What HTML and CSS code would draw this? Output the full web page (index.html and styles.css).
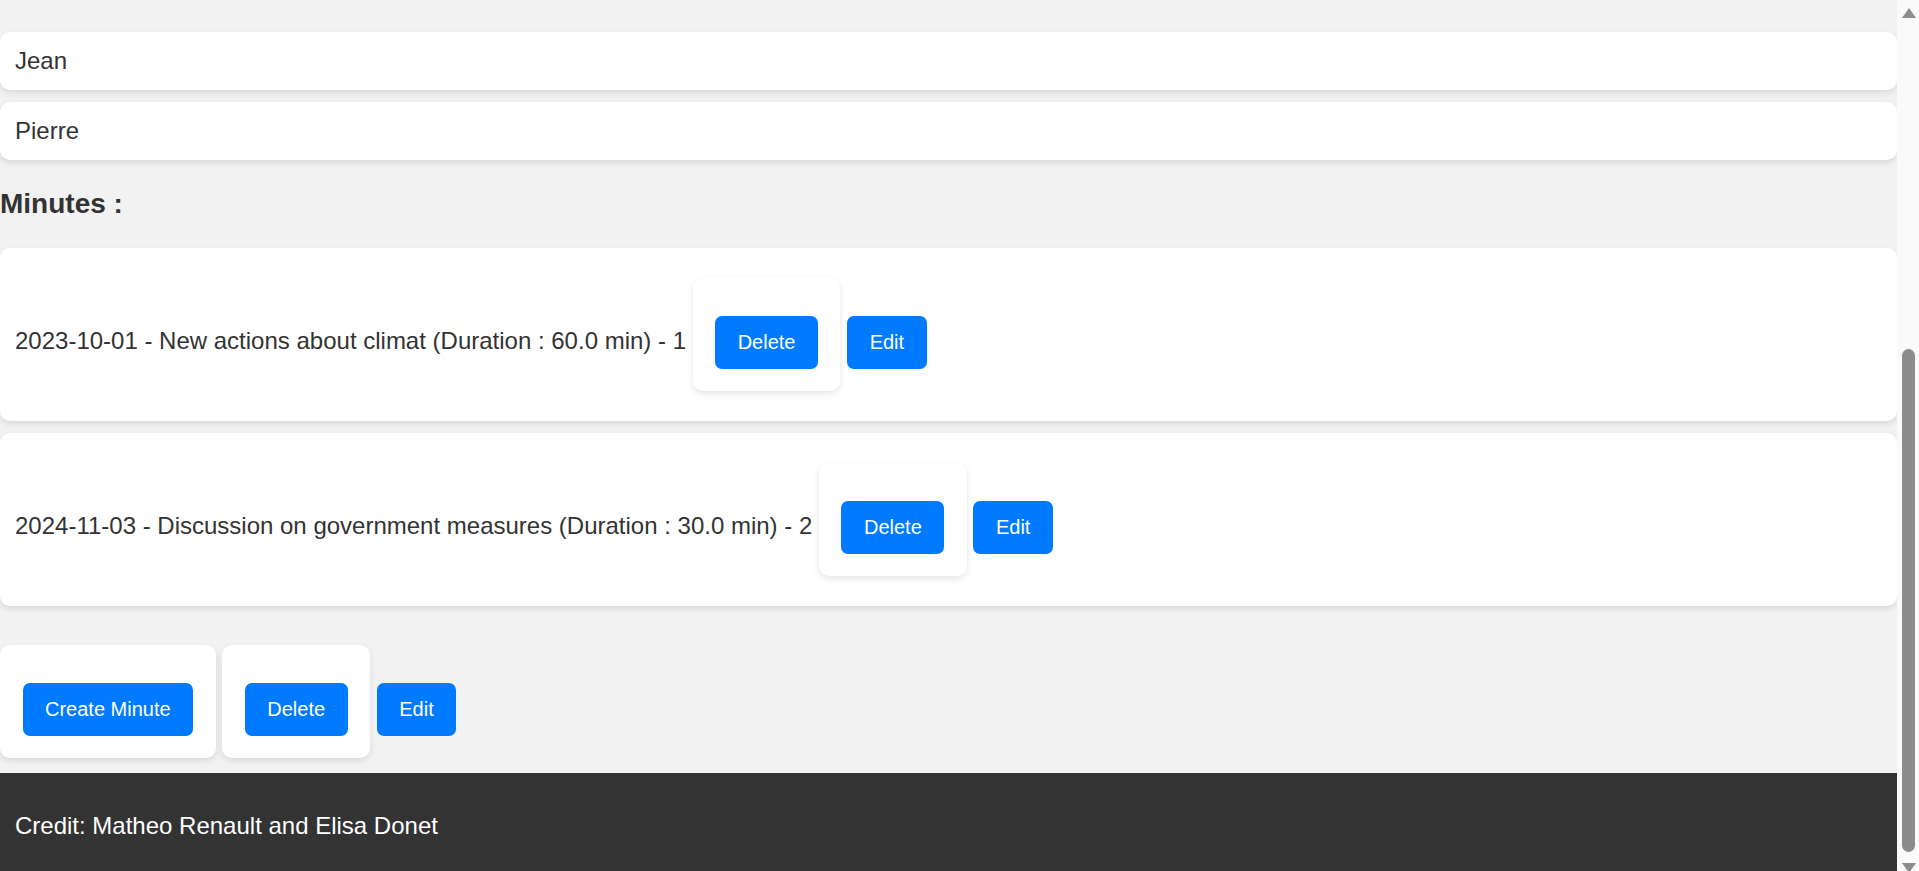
FILE: index.html
```html
<!DOCTYPE html>
<html lang="en">
<head>
<meta charset="utf-8">
<title>Meeting details</title>
<link rel="stylesheet" href="styles.css">
</head>
<body>
<div class="window">
  <div class="viewport">
    <main class="page">
      <ul class="card-list">
        <li class="card">Jean</li>
        <li class="card">Pierre</li>
      </ul>

      <h3 class="section-title">Minutes :</h3>
      <ul class="card-list">
        <li class="card minute">2023-10-01 - New actions about climat (Duration : 60.0 min) - 1 <form class="inline-form"><button type="button" class="btn">Delete</button></form> <button type="button" class="btn">Edit</button></li>
        <li class="card minute">2024-11-03 - Discussion on government measures (Duration : 30.0 min) - 2 <form class="inline-form"><button type="button" class="btn">Delete</button></form> <button type="button" class="btn">Edit</button></li>
      </ul>

      <div class="actions"><form class="inline-form"><button type="button" class="btn">Create Minute</button></form> <form class="inline-form"><button type="button" class="btn">Delete</button></form> <button type="button" class="btn">Edit</button></div>
    </main>
    <footer class="site-footer">
      <p class="credit">Credit: Matheo Renault and Elisa Donet</p>
    </footer>
  </div>
  <div class="scrollbar" aria-hidden="true">
    <div class="sb-button sb-up"><span class="arrow-up"></span></div>
    <div class="sb-track"><div class="sb-thumb"></div></div>
    <div class="sb-button sb-down"><span class="arrow-down"></span></div>
  </div>
</div>
</body>
</html>
```

FILE: styles.css
```css
html, body {
  margin: 0;
  height: 100%;
  overflow: hidden;
}

body {
  background: #f2f2f2;
  color: #333;
  font-family: "Liberation Sans", Arial, sans-serif;
  font-size: 24px;
}

.window {
  display: flex;
  height: 100%;
}

.viewport {
  flex: 1;
  min-width: 0;
  display: flex;
  flex-direction: column;
  overflow: hidden;
}

.page {
  padding-top: 32px;
}

.section-title {
  margin: 28px 0;
  font-size: 28px;
  font-weight: bold;
  color: #333;
}

.card-list {
  list-style: none;
  margin: 0 0 24px;
  padding: 0;
}

.card {
  background: #fff;
  border-radius: 10px;
  box-shadow: 0 3px 6px rgba(0, 0, 0, 0.1);
  padding: 15px;
  margin-bottom: 12px;
}

.card.minute {
  padding: 30px 15px;
}

.inline-form {
  display: inline-block;
  margin: 0;
  padding: 22px 22.5px;
  background: #fff;
  border-radius: 10px;
  box-shadow: 0 3px 7px rgba(0, 0, 0, 0.1);
}

.btn {
  display: inline-block;
  margin: 16px 0 0;
  padding: 15px 22.5px;
  border: none;
  border-radius: 7px;
  background: #007bff;
  color: #fff;
  font-family: "Liberation Sans", Arial, sans-serif;
  font-size: 20px;
  line-height: 23px;
  cursor: pointer;
}

.actions {
  padding: 15px 0;
}

.site-footer {
  background: #333;
  color: #fff;
  padding: 39px 15px 31px;
}

.credit {
  margin: 0;
  font-size: 24px;
  line-height: 28px;
}

/* drawn scrollbar */
.scrollbar {
  width: 22px;
  flex: none;
  background: #fafafa;
  display: flex;
  flex-direction: column;
  overflow: hidden;
}

.sb-button {
  flex: none;
  display: flex;
  justify-content: center;
  padding-left: 1px;
}

.sb-up {
  height: 22px;
  padding-top: 8px;
  box-sizing: border-box;
}

.sb-down {
  height: 19px;
  padding-top: 11px;
  box-sizing: border-box;
}

.arrow-up {
  width: 0;
  height: 0;
  border-left: 7px solid transparent;
  border-right: 7px solid transparent;
  border-bottom: 10px solid #8c8c8c;
}

.arrow-down {
  width: 0;
  height: 0;
  border-left: 7px solid transparent;
  border-right: 7px solid transparent;
  border-top: 10px solid #8c8c8c;
}

.sb-track {
  flex: 1;
  display: flex;
  flex-direction: column;
  justify-content: flex-end;
}

.sb-thumb {
  height: 503px;
  margin: 0 4px 0 5px;
  background: #8c8c8c;
  border-radius: 7px;
}
```
